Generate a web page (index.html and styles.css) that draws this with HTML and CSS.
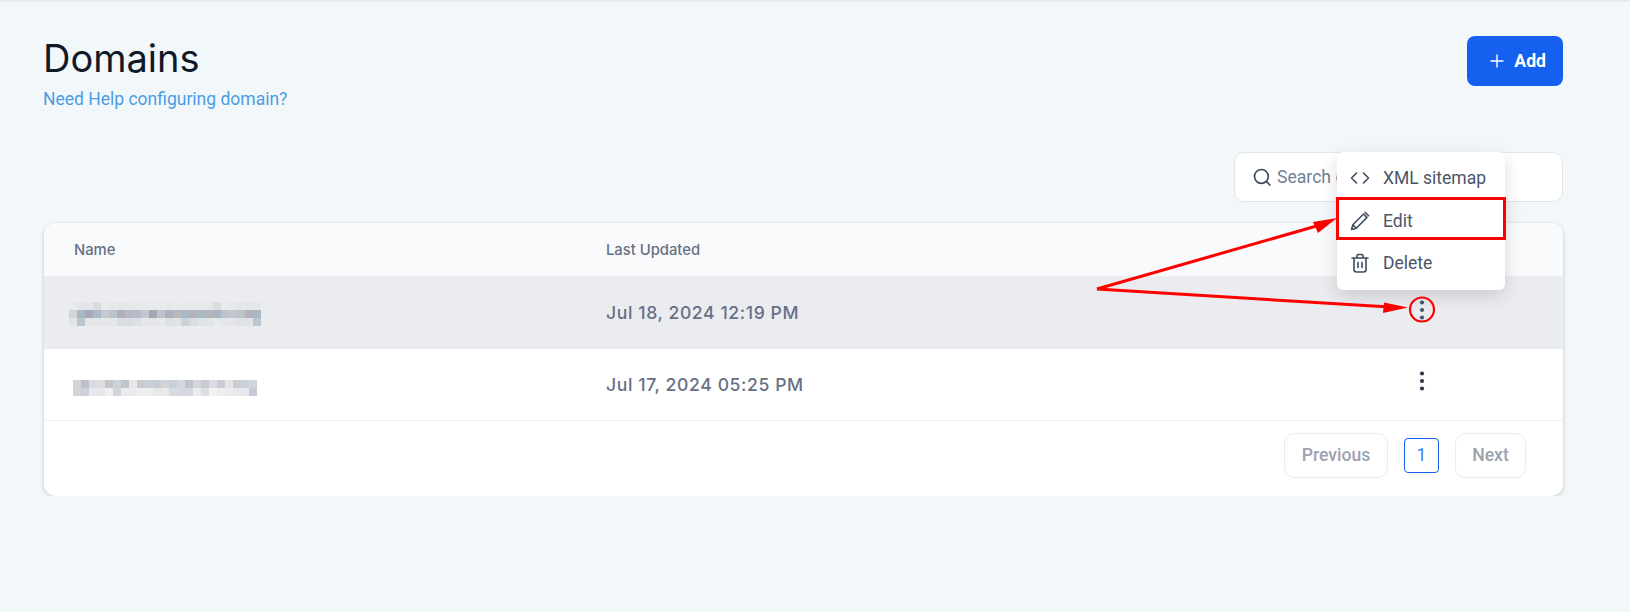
FILE: index.html
```html
<!DOCTYPE html>
<html lang="en">
<head>
  <meta charset="UTF-8">
  <title>Domains</title>
  <link rel="stylesheet" href="styles.css">
</head>
<body>

  <div class="top-strip"></div>

  <main class="page">
    <div class="page-header">
      <div class="page-title">
        <h1>Domains</h1>
        <a class="help-link" href="#">Need Help configuring domain?</a>
      </div>
      <button class="add-button" type="button">
        <svg width="14" height="14" viewBox="0 0 14 14" fill="none" stroke="currentColor" stroke-width="1.400" stroke-linecap="round"><path d="M7 1v12M1 7h12"/></svg>
        Add
      </button>
    </div>

    <div class="toolbar">
      <label class="search-box">
        <svg width="18" height="18" viewBox="0 0 18 18" fill="none" stroke="#3d4a5f" stroke-width="1.700" stroke-linecap="round"><circle cx="8.400" cy="8.400" r="6.900"/><path d="M13.400 13.400l3.400 3.600"/></svg>
        <input type="text" placeholder="Search domains">
      </label>
    </div>

    <div class="card">
      <table class="domain-table">
        <thead>
          <tr>
            <th class="col-name">Name</th>
            <th class="col-date">Last Updated</th>
            <th></th>
          </tr>
        </thead>
        <tbody>
          <tr class="row-active">
            <td><div class="mosaic mosaic-one" id="mosaicOne"></div></td>
            <td class="date">Jul 18, 2024 12:19 PM</td>
            <td class="actions">
              <svg class="dots" width="20" height="20" viewBox="0 0 20 20" fill="#4a5568"><circle cx="10" cy="2.500" r="2.100"/><circle cx="10" cy="10" r="2.100"/><circle cx="10" cy="17.500" r="2.100"/></svg>
            </td>
          </tr>
          <tr>
            <td><div class="mosaic mosaic-two" id="mosaicTwo"></div></td>
            <td class="date">Jul 17, 2024 05:25 PM</td>
            <td class="actions">
              <svg class="dots" width="20" height="20" viewBox="0 0 20 20" fill="#2d3748"><circle cx="10" cy="2.500" r="2.100"/><circle cx="10" cy="10" r="2.100"/><circle cx="10" cy="17.500" r="2.100"/></svg>
            </td>
          </tr>
        </tbody>
      </table>

      <div class="pagination">
        <button class="page-button page-prev" type="button">Previous</button>
        <span class="page-current">1</span>
        <button class="page-button page-next" type="button">Next</button>
      </div>
    </div>

    <ul class="row-menu">
      <li>
        <svg width="20" height="20" viewBox="0 0 20 20" fill="none" stroke="#3d4a5f" stroke-width="1.600" stroke-linecap="round" stroke-linejoin="round"><path d="M6.500 5L1.500 10l5 5M13.500 5l5 5-5 5"/></svg>
        XML sitemap
      </li>
      <li>
        <svg width="20" height="20" viewBox="0 0 20 20" fill="none" stroke="#3d4a5f" stroke-width="1.500" stroke-linecap="round" stroke-linejoin="round"><path d="M1.500 18.500l1.300-4.800L13.600 3l3.400 3.400L6.300 17.200zM2.800 13.700l3.500 3.500M15 1.200l3.600 3.600"/></svg>
        Edit
      </li>
      <li>
        <svg width="20" height="20" viewBox="0 0 20 20" fill="none" stroke="#3d4a5f" stroke-width="1.600" stroke-linecap="round" stroke-linejoin="round"><path d="M2 5h16M7 5V3a1.500 1.500 0 0 1 1.500-1.500h3A1.500 1.500 0 0 1 13 3v2M4 5v11.500A2.500 2.500 0 0 0 6.500 19h7a2.500 2.500 0 0 0 2.500-2.500V5M8 9.500v5M12 9.500v5"/></svg>
        Delete
      </li>
    </ul>
  </main>

  <!-- red markup drawn on top of the screenshot -->
  <svg class="markup" width="1630" height="612" viewBox="0 0 1630 612">
    <g stroke="#ff0000" stroke-width="3" fill="none">
      <path d="M1097 289L1320 225"/>
      <path d="M1097 289L1390 307"/>
    </g>
    <g fill="#ff0000">
      <path d="M1337 218L1318 233 1313 222z"/>
      <path d="M1408 307.500L1383 313 1384 302.500z"/>
    </g>
    <rect x="1337.500" y="198.500" width="167" height="40" fill="none" stroke="#ff0000" stroke-width="3"/>
    <circle cx="1422" cy="309.500" r="12" fill="none" stroke="#ff0000" stroke-width="2.200"/>
  </svg>

  <script src="script.js"></script>
</body>
</html>
```

FILE: styles.css
```css
body {
  font-family: Inter, "Liberation Sans", sans-serif;
  background-color: #f2f7fa;
  margin: 0;
  overflow: hidden;
}

.top-strip {
  height: 2px;
  background-color: #e8ebee;
}

.page {
  position: relative;
  padding: 34px 67px 0 44px;
}

.page-header {
  display: flex;
  justify-content: space-between;
  align-items: flex-start;
}

.page-title {
  margin-left: -1px;
}

h1 {
  margin: 0;
  font-size: 38px;
  line-height: 44px;
  font-weight: 400;
  color: #111827;
}

.help-link {
  display: block;
  margin-top: 6px;
  font-family: Roboto, sans-serif;
  font-size: 17.500px;
  line-height: 26px;
  color: #4a9de3;
  text-decoration: none;
}

.add-button {
  display: flex;
  align-items: center;
  justify-content: flex-end;
  gap: 10px;
  box-sizing: border-box;
  width: 96px;
  height: 50px;
  padding: 0 17px 0 0;
  background-color: #1660f0;
  color: white;
  border: none;
  border-radius: 8px;
  font-family: Roboto, sans-serif;
  font-size: 17.600px;
  font-weight: 700;
  cursor: pointer;
}

.toolbar {
  display: flex;
  justify-content: flex-end;
  margin-top: 40px;
}

.search-box {
  display: flex;
  align-items: center;
  gap: 6px;
  box-sizing: border-box;
  width: 329px;
  height: 50px;
  padding: 0 18px;
  background-color: white;
  border: 1px solid #e2e5ec;
  border-radius: 10px;
}

.search-box input {
  flex: 1;
  min-width: 0;
  border: none;
  outline: none;
  padding: 0;
  font-family: Roboto, sans-serif;
  font-size: 17.600px;
  color: #718096;
}

.search-box input::placeholder {
  color: #718096;
}

.card {
  margin-top: 21px;
  background-color: white;
  border-radius: 12px;
  box-shadow: 0 1px 4px rgba(0, 0, 0, 0.2);
  overflow: hidden;
}

.domain-table {
  width: 100%;
  border-collapse: collapse;
  table-layout: fixed;
}

.domain-table th {
  height: 53px;
  padding: 0 0 0 30px;
  background-color: #f9fafc;
  font-size: 14.800px;
  font-weight: 500;
  color: #667085;
  text-align: left;
}

.col-name {
  width: 502px;
}

.col-date {
  width: 532px;
}

.domain-table td {
  padding: 0 0 0 30px;
  border-bottom: 1px solid #edf0f5;
}

.domain-table tbody tr {
  height: 71px;
}

.domain-table .row-active {
  height: 73px;
}

.row-active td {
  background-color: #ebecef;
  border-bottom: none;
}

.date {
  font-size: 17.600px;
  font-weight: 500;
  letter-spacing: 0.600px;
  color: #667085;
}

.domain-table .actions {
  padding: 0 131px 0 0;
  text-align: right;
}

.dots {
  display: inline-block;
  vertical-align: middle;
  margin-bottom: 6px;
}

.mosaic {
  display: grid;
  grid-auto-rows: 8px;
  grid-template-columns: repeat(auto-fill, 8px);
}

.mosaic-one {
  width: 192px;
  margin: 3px 0 0 -5px;
}

.mosaic-two {
  width: 184px;
  margin: 8px 0 0 -1px;
}

.pagination {
  display: flex;
  justify-content: flex-end;
  align-items: center;
  gap: 16px;
  padding: 12px 37px 18px 0;
}

.page-button {
  box-sizing: border-box;
  height: 45px;
  padding: 0;
  background-color: white;
  border: 1px solid #e9ebef;
  border-radius: 10px;
  font-family: Roboto, sans-serif;
  font-size: 17.600px;
  font-weight: 500;
  color: #9ca3af;
  cursor: pointer;
}

.page-prev {
  width: 104px;
}

.page-next {
  width: 71px;
}

.page-current {
  box-sizing: border-box;
  width: 35px;
  height: 35px;
  line-height: 33px;
  text-align: center;
  border: 1px solid #1660f0;
  border-radius: 4px;
  font-family: Roboto, sans-serif;
  font-size: 17.600px;
  color: #3b82f6;
}

.row-menu {
  position: absolute;
  top: 150px;
  right: 125px;
  box-sizing: border-box;
  width: 168px;
  height: 138px;
  margin: 0;
  padding: 5px 0 0;
  list-style: none;
  background-color: white;
  border-radius: 6px;
  box-shadow: 0 6px 18px rgba(0, 0, 0, 0.14);
}

.row-menu li {
  display: flex;
  align-items: center;
  gap: 13px;
  height: 42.500px;
  padding-left: 13px;
  font-family: Roboto, sans-serif;
  font-size: 17.500px;
  color: #4a5568;
}

.markup {
  position: absolute;
  top: 0;
  left: 0;
  pointer-events: none;
}
```

FILE: script.js
```js
// pixelated names, one list per mosaic, read left to right and top to bottom
const mosaicOne = [
  "e8e9ec", "e3e5e9", "e4e6ea", "dadce1", "e9eaee", "e6e8ec", "e6e7eb", "e7e8eb", "e8e9ec", "e8e9ec", "e8e9ec", "e8e9ed",
  "e7e8eb", "e9eaee", "e8e9ed", "e7e8ec", "e8e9ec", "e6e7eb", "dcdee2", "e9eaee", "e6e8ec", "e4e6ea", "e3e5e9", "e4e6ea",
  "d2d3d6", "aab7c4", "a6a9b5", "aab8c8", "c8c9d0", "b7c4cf", "aeb0bc", "b6b8c2", "b5bccb", "c3c8d0", "a5a8b2", "c0c3cb",
  "a8b2c0", "b9b7bd", "a8b8c6", "b3b2ba", "a9b8c5", "b6b5bb", "a8b5c5", "bcc3ce", "c4c6cc", "bac4c9", "b2b0bc", "a7b8c6",
  "e3e4e6", "bac6d0", "e2e4e8", "e4e6ea", "e6e7ea", "e4e7ea", "dcdde3", "dadde6", "dde1e6", "e6e7ea", "e4e6e8", "e7e8ec",
  "dde1e6", "dfe2e6", "cfd1d9", "dadcdf", "dce3ea", "e0e3e8", "e8e9ed", "e5e6ea", "e4e5e9", "e0e1e5", "e2e3e7", "bcc6d0"
];

const mosaicTwo = [
  "d3d5d6", "bdc1cb", "d8dae0", "dcdee1", "c4c5c7", "c9d3da", "c1c4cb", "e8e8e6", "c8cad1", "c8d0d8", "c9cbd1", "d1d3d5",
  "c7d0da", "d5d7dc", "bcc3cd", "d4d5d7", "c8cbd6", "dadde3", "c9cbd5", "e3e4e6", "cbccd0", "c9d2da", "d0d5d9",
  "d3d4d6", "cdd0d9", "e6e7ec", "e6e7ec", "f0f0f1", "d3d5da", "e8ebf0", "e9ebef", "eceef1", "edf0f3", "e8e8e9", "e9e9eb",
  "d8dbe1", "d6d8dd", "d4d7db", "ebebee", "dbdee5", "f3f3f5", "eeeef0", "e9ebee", "e8e8ea", "e7e8ea", "c4cbd6"
];

function desenharMosaico(id, cores) {
  const alvo = document.getElementById(id);
  cores.forEach(cor => {
    const celula = document.createElement("span");
    celula.style.backgroundColor = "#" + cor;
    alvo.appendChild(celula);
  });
}

desenharMosaico("mosaicOne", mosaicOne);
desenharMosaico("mosaicTwo", mosaicTwo);
```
